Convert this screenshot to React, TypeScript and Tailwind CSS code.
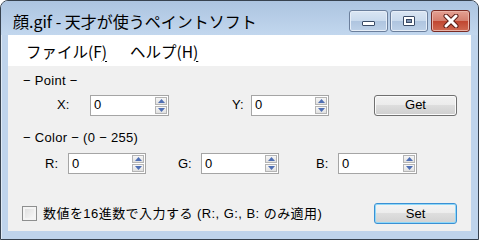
import React from "react";

function Arrow({ up }: { up: boolean }) {
  return (
    <svg width="7" height="4" viewBox="0 0 7 4">
      <path d={up ? "M3.5 0 L7 4 L0 4Z" : "M0 0 L7 0 L3.5 4Z"} fill="#4f6fb4" />
    </svg>
  );
}

function SpinBox({ className }: { className: string }) {
  return (
    <div className={`flex h-[21px] items-center border border-[#a5a5a5] bg-white ${className}`}>
      <span className="flex-1 pl-[3px] text-[13px] leading-[16px] text-black">0</span>
      <div className="mr-[1px] flex flex-col gap-[1px]">
        <div className="flex h-[8px] w-[12px] items-center justify-center border border-[#b4b4b4] bg-gradient-to-b from-[#f7f7f7] to-[#e0e0e0]">
          <Arrow up />
        </div>
        <div className="flex h-[8px] w-[12px] items-center justify-center border border-[#b4b4b4] bg-gradient-to-b from-[#f7f7f7] to-[#e0e0e0]">
          <Arrow up={false} />
        </div>
      </div>
    </div>
  );
}

function PushButton({ label, focused }: { label: string; focused?: boolean }) {
  return (
    <button
      className={
        focused
          ? "flex h-[21px] w-[83px] items-center justify-center rounded-[3px] border border-[#3a90d4] bg-[linear-gradient(#f4f4f4_0%,#ececec_50%,#dedede_50%,#d2d2d2_100%)] text-[13px] text-black shadow-[inset_0_0_0_1px_#8fd8f8]"
          : "flex h-[21px] w-[83px] items-center justify-center rounded-[3px] border border-[#707070] bg-[linear-gradient(#f2f2f2_0%,#ebebeb_50%,#dddddd_50%,#cfcfcf_100%)] text-[13px] text-black shadow-[inset_0_0_0_1px_#fbfbfb]"
      }
    >
      {label}
    </button>
  );
}

export default function App() {
  return (
    <div className="h-[240px] w-[480px] bg-white font-['Liberation_Sans','Noto_Sans_CJK_JP',sans-serif]">
      <div className="flex h-[240px] w-[479px] flex-col rounded-t-[8px] border border-[#37424f] bg-[#bfd4ec] shadow-[inset_1px_1px_0_#dfeaf6]">
        {/* title bar */}
        <div className="flex h-[34px] items-start rounded-t-[7px] bg-gradient-to-b from-[#acc4e0] to-[#c2d7ee]">
          <div className="pl-[12px] pt-[10px] font-['Noto_Sans_CJK_JP',sans-serif] text-[16px] leading-[20px] text-black">
            顔.gif - 天才が使うペイントソフト
          </div>
          <div className="ml-auto mr-[8px] mt-[9px] flex">
            <div className="flex h-[22px] w-[39px] items-end justify-center rounded-[3px] border border-[#6b7f9c] bg-[linear-gradient(#dae6f3_0%,#c9daed_50%,#aec4df_50%,#bdd1e8_100%)] pb-[5px] shadow-[inset_0_0_0_1px_#e6eef8]">
              <div className="h-[5px] w-[13px] rounded-[1px] border border-[#3a4b66] bg-white" />
            </div>
            <div className="ml-[2px] flex h-[22px] w-[38px] items-center justify-center rounded-[3px] border border-[#6b7f9c] bg-[linear-gradient(#dae6f3_0%,#c9daed_50%,#aec4df_50%,#bdd1e8_100%)] shadow-[inset_0_0_0_1px_#e6eef8]">
              <div className="flex h-[10px] w-[12px] items-center justify-center rounded-[1px] border border-[#3a4b66] bg-white">
                <div className="h-[4px] w-[6px] border border-[#3a4b66] bg-[#7f93b3]" />
              </div>
            </div>
            <div className="ml-[3px] flex h-[22px] w-[39px] items-center justify-center rounded-[3px] border border-[#7a2b24] bg-[linear-gradient(#e4a193_0%,#d47e6d_50%,#c0452f_50%,#cf6a52_100%)] shadow-[inset_0_0_0_1px_#eab3a7]">
              <svg width="16" height="14" viewBox="0 0 16 14">
                <path d="M3 2 L13 12 M13 2 L3 12" stroke="#5a1d16" strokeWidth="5" strokeLinecap="round" />
                <path d="M3 2 L13 12 M13 2 L3 12" stroke="#ffffff" strokeWidth="3" strokeLinecap="round" />
              </svg>
            </div>
          </div>
        </div>

        {/* client area */}
        <div className="ml-[7px] flex h-[196px] w-[463px] flex-col">
          {/* menu bar */}
          <div className="flex h-[31px] items-center bg-white font-['Noto_Sans_CJK_JP',sans-serif] text-[15.5px] leading-[20px] text-black">
            <span className="ml-[18px] w-[104px]">
              ファイル(F<span className="underline underline-offset-[3px]">)</span>
            </span>
            <span>
              ヘルプ(H<span className="underline underline-offset-[3px]">)</span>
            </span>
          </div>

          {/* content */}
          <div className="flex flex-1 flex-col bg-[#f0f0f0] text-[13px] leading-[16px] text-black">
            <div className="ml-[15px] mt-[7px] tracking-[0.3px]">− Point −</div>

            <div className="mt-[5px] flex h-[22px] items-center">
              <span className="ml-[49px] w-[33px]">X:</span>
              <SpinBox className="w-[79px]" />
              <span className="ml-[63px] w-[19px]">Y:</span>
              <SpinBox className="w-[78px]" />
              <div className="ml-[45px]">
                <PushButton label="Get" />
              </div>
            </div>

            <div className="ml-[15px] mt-[14px] tracking-[0.3px]">− Color − (0 − 255)</div>

            <div className="mt-[7px] flex h-[21px] items-center">
              <span className="ml-[37px] w-[23px]">R:</span>
              <SpinBox className="w-[78px]" />
              <span className="ml-[32px] w-[23px]">G:</span>
              <SpinBox className="w-[78px]" />
              <span className="ml-[37px] w-[22px]">B:</span>
              <SpinBox className="w-[79px]" />
            </div>

            <div className="mt-[29px] flex h-[21px] items-center">
              <div className="ml-[14px] h-[15px] w-[15px] border border-[#8e8f8f] bg-gradient-to-br from-[#dcdcdc] to-[#fbfbfb] shadow-[inset_0_0_0_2px_#f4f4f4]" />
              <span className="ml-[6px] tracking-[0.45px]">数値を16進数で入力する (R:, G:, B: のみ適用)</span>
              <div className="ml-auto mr-[14px]">
                <PushButton label="Set" focused />
              </div>
            </div>
          </div>
        </div>
      </div>
    </div>
  );
}
